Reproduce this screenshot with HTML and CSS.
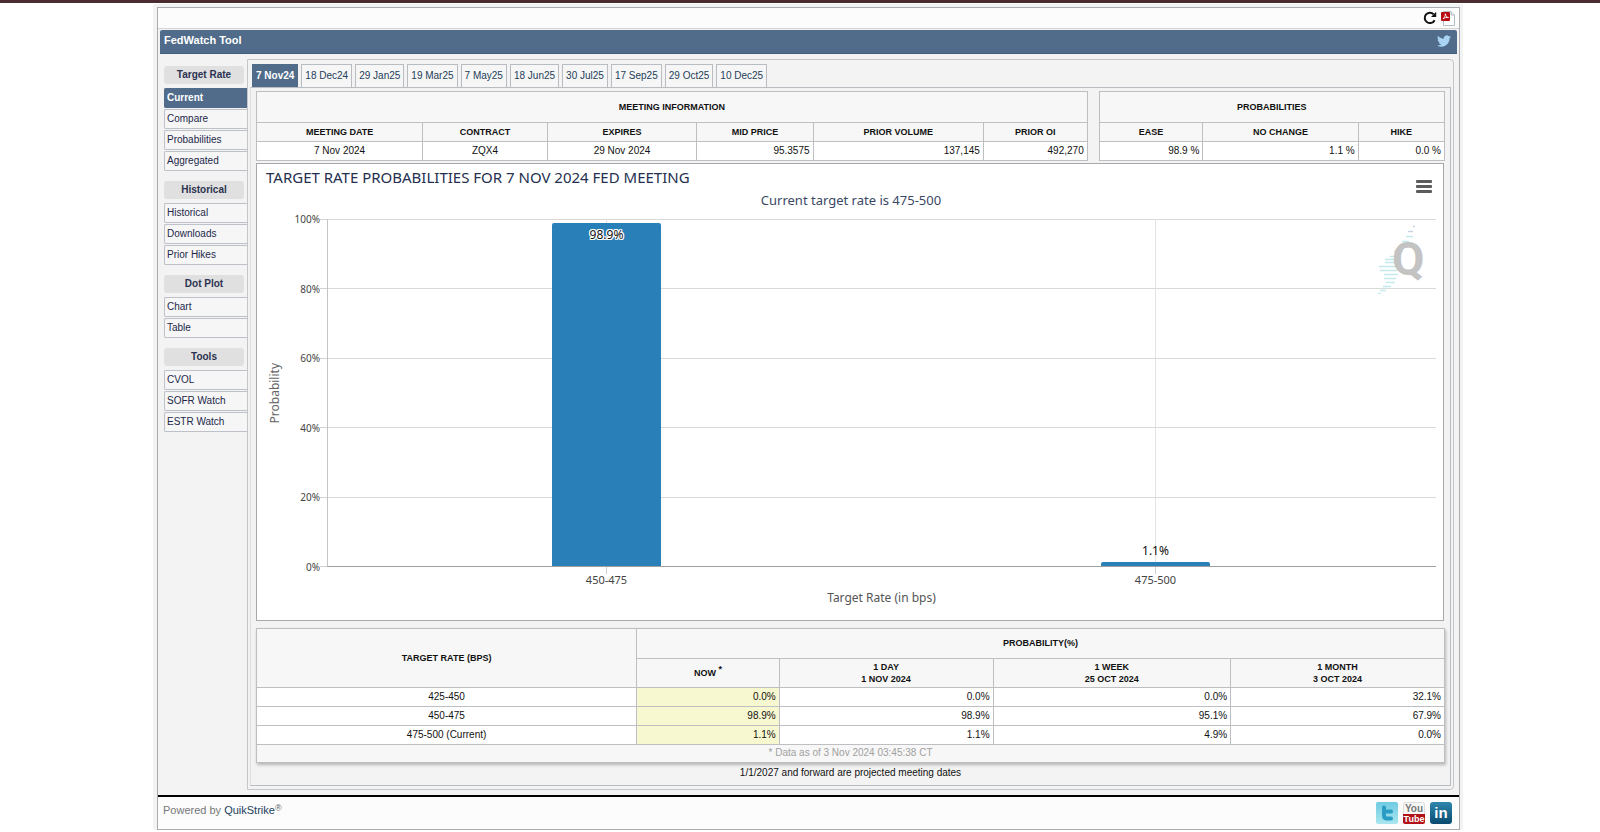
FILE: index.html
```html
<!DOCTYPE html>
<html lang="en">
<head>
<meta charset="utf-8">
<title>FedWatch Tool</title>
<link rel="stylesheet" href="styles.css">
</head>
<body>
<div class="page">
<div class="frame">
<div class="widget">
  <div class="toolbar">
    <button class="icon-btn" type="button" aria-label="Refresh">
      <svg width="14" height="14" viewBox="0 0 14 14"><path d="M11.6 9.2A5.2 5.2 0 1 1 10.6 3.2" fill="none" stroke="#111" stroke-width="2"/><path d="M13.2 0.8V6H8z" fill="#111"/></svg>
    </button>
    <button class="icon-btn" type="button" aria-label="Export to PDF">
      <svg width="14" height="15" viewBox="0 0 14 15"><path d="M2.5 .5H10L13.500 4V14.500H2.500z" fill="#fff" stroke="#b4bcc4"/><path d="M10 .5V4H13.500" fill="#e8edf2" stroke="#b4bcc4"/><rect x="0" y="1" width="9" height="9" rx="1" fill="#b80d12"/><path d="M2 8C3.500 6.500 4.500 5 4.300 2.800C5 5.500 6 6.500 7.500 6.500C5.500 6.200 3.500 6.600 2 8" fill="none" stroke="#fff" stroke-width=".9"/></svg>
    </button>
  </div>
  <header class="titlebar">
    <h1 class="titlebar-text">FedWatch Tool</h1>
    <a class="titlebar-link" href="#" aria-label="Twitter">
      <svg width="14" height="12" viewBox="0 2 24 20"><path fill="#a9d4f5" d="M23.950 4.570a10 10 0 0 1-2.820.77 4.960 4.960 0 0 0 2.160-2.720c-.95.550-2 .95-3.120 1.180a4.920 4.920 0 0 0-8.380 4.480C7.690 8.100 4.070 6.130 1.640 3.160a4.820 4.820 0 0 0-.67 2.480c0 1.710.87 3.210 2.190 4.100a4.900 4.900 0 0 1-2.230-.62v.06a4.920 4.920 0 0 0 3.950 4.830 5 5 0 0 1-2.210.08 4.940 4.940 0 0 0 4.600 3.420A9.870 9.870 0 0 1 0 19.540a13.990 13.990 0 0 0 7.550 2.210c9.050 0 14-7.500 14-13.980 0-.21 0-.42-.02-.63a9.940 9.940 0 0 0 2.420-2.570z"/></svg>
    </a>
  </header>
  <div class="main">
    <nav class="sidebar">
      <section class="group">
        <h2 class="group-title">Target Rate</h2>
        <a class="item item-active" href="#">Current</a>
        <a class="item" href="#">Compare</a>
        <a class="item" href="#">Probabilities</a>
        <a class="item" href="#">Aggregated</a>
      </section>
      <section class="group">
        <h2 class="group-title">Historical</h2>
        <a class="item" href="#">Historical</a>
        <a class="item" href="#">Downloads</a>
        <a class="item" href="#">Prior Hikes</a>
      </section>
      <section class="group">
        <h2 class="group-title">Dot Plot</h2>
        <a class="item" href="#">Chart</a>
        <a class="item" href="#">Table</a>
      </section>
      <section class="group">
        <h2 class="group-title">Tools</h2>
        <a class="item" href="#">CVOL</a>
        <a class="item" href="#">SOFR Watch</a>
        <a class="item" href="#">ESTR Watch</a>
      </section>
    </nav>
    <main class="panel">
      <nav class="tabs">
        <a class="tab tab-active" href="#">7 Nov24</a>
        <a class="tab" href="#">18 Dec24</a>
        <a class="tab" href="#">29 Jan25</a>
        <a class="tab" href="#">19 Mar25</a>
        <a class="tab" href="#">7 May25</a>
        <a class="tab" href="#">18 Jun25</a>
        <a class="tab" href="#">30 Jul25</a>
        <a class="tab" href="#">17 Sep25</a>
        <a class="tab" href="#">29 Oct25</a>
        <a class="tab" href="#">10 Dec25</a>
      </nav>
      <div class="content">
        <div class="summary">
          <table class="grid">
            <colgroup><col class="w-date"><col class="w-contract"><col class="w-expires"><col class="w-price"><col class="w-volume"><col></colgroup>
            <thead>
              <tr class="caption-row"><th colspan="6">MEETING INFORMATION</th></tr>
              <tr><th>MEETING DATE</th><th>CONTRACT</th><th>EXPIRES</th><th>MID PRICE</th><th>PRIOR VOLUME</th><th>PRIOR OI</th></tr>
            </thead>
            <tbody>
              <tr><td class="center">7 Nov 2024</td><td class="center">ZQX4</td><td class="center">29 Nov 2024</td><td>95.3575</td><td>137,145</td><td>492,270</td></tr>
            </tbody>
          </table>
          <table class="grid">
            <colgroup><col class="w-ease"><col class="w-nochange"><col></colgroup>
            <thead>
              <tr class="caption-row"><th colspan="3">PROBABILITIES</th></tr>
              <tr><th>EASE</th><th>NO CHANGE</th><th>HIKE</th></tr>
            </thead>
            <tbody>
              <tr><td>98.9 %</td><td>1.1 %</td><td>0.0 %</td></tr>
            </tbody>
          </table>
        </div>

        <section class="chart">
          <h2 class="chart-title">TARGET RATE PROBABILITIES FOR 7 NOV 2024 FED MEETING</h2>
          <p class="chart-subtitle">Current target rate is 475-500</p>
          <button class="chart-menu" type="button" aria-label="Chart menu"><span></span><span></span><span></span></button>
          <div class="chart-body">
            <div class="y-title"><span>Probability</span></div>
            <div class="y-axis"><span>100%</span><span>80%</span><span>60%</span><span>40%</span><span>20%</span><span>0%</span></div>
            <div class="plot">
              <div class="bands"><i></i><i></i><i></i><i></i><i></i></div>
              <svg class="watermark" width="48" height="72" viewBox="0 0 48 72">
                <g stroke="#c3e9ee" stroke-width="1.500"><path d="M29 14.500h7M25 19.500h7M21 24.500h8M17 29.500h9M13 34.500h9M8 37.500h13M8 40.500h13M2 44.500h18M3 48.500h17M7 52.500h14M7 56.500h12M9 60.500h9M6 64.500h8M3 68.500h6M1 71.500h3"/><path d="M31 9.500h5M36 4.500h2" stroke="#c9d2df"/></g>
                <text class="watermark-letter" x="15" y="53">Q</text>
              </svg>
              <div class="bars">
                <div class="slot"><div class="bar" style="height:98.9%"><span class="bar-label bar-label-inside">98.9%</span></div></div>
                <div class="slot"><div class="bar" style="height:1.1%"><span class="bar-label bar-label-above">1.1%</span></div></div>
              </div>
            </div>
            <div class="x-axis"><span>450-475</span><span>475-500</span></div>
            <div class="x-title">Target Rate (in bps)</div>
          </div>
        </section>

        <table class="grid history">
          <colgroup><col class="w-rate"><col class="w-now"><col class="w-day"><col class="w-week"><col></colgroup>
          <thead>
            <tr class="caption-row"><th rowspan="2">TARGET RATE (BPS)</th><th colspan="4">PROBABILITY(%)</th></tr>
            <tr class="period-row"><th>NOW <sup>*</sup></th><th>1 DAY<br>1 NOV 2024</th><th>1 WEEK<br>25 OCT 2024</th><th>1 MONTH<br>3 OCT 2024</th></tr>
          </thead>
          <tbody>
            <tr><td class="center">425-450</td><td class="now">0.0%</td><td>0.0%</td><td>0.0%</td><td>32.1%</td></tr>
            <tr><td class="center">450-475</td><td class="now">98.9%</td><td>98.9%</td><td>95.1%</td><td>67.9%</td></tr>
            <tr><td class="center">475-500 (Current)</td><td class="now">1.1%</td><td>1.1%</td><td>4.9%</td><td>0.0%</td></tr>
          </tbody>
          <tfoot>
            <tr><td class="asof" colspan="5">* Data as of 3 Nov 2024 03:45:38 CT</td></tr>
          </tfoot>
        </table>
        <p class="note">1/1/2027 and forward are projected meeting dates</p>
      </div>
    </main>
  </div>
  <footer class="footer">
    <p class="powered">Powered by <a href="#">QuikStrike<sup>®</sup></a></p>
    <div class="social">
      <a href="#" aria-label="Twitter">
        <svg width="22" height="22" viewBox="0 0 22 22"><defs><linearGradient id="tw" x2="0" y2="1"><stop offset="0" stop-color="#6fcbe2"/><stop offset="1" stop-color="#a9e6ef"/></linearGradient></defs><rect width="22" height="22" rx="2" fill="url(#tw)"/><path d="M8 5.500V13.500Q8 16.500 11 16.500H15M8 9.500H15" fill="none" stroke="#2b9cc4" stroke-width="4" stroke-linecap="round" stroke-linejoin="round"/></svg>
      </a>
      <a href="#" aria-label="YouTube">
        <svg width="22" height="22" viewBox="0 0 22 22"><rect x=".5" y=".5" width="21" height="21" rx="2" fill="#f7f7f7" stroke="#ddd"/><path d="M0 12H22V20Q22 22 20 22H2Q0 22 0 20z" fill="#b01218"/><text class="yt yt-you" x="11" y="10">You</text><text class="yt yt-tube" x="11" y="20">Tube</text></svg>
      </a>
      <a href="#" aria-label="LinkedIn">
        <svg width="22" height="22" viewBox="0 0 22 22"><defs><linearGradient id="li" x2="0" y2="1"><stop offset="0" stop-color="#2f86ad"/><stop offset="1" stop-color="#0a4a70"/></linearGradient></defs><rect width="22" height="22" rx="3" fill="url(#li)"/><text class="li" x="11" y="16">in</text></svg>
      </a>
    </div>
  </footer>
</div>
</div>
</div>
</body>
</html>
```
FILE: styles.css
```css
* { box-sizing: border-box; }

body {
  margin: 0;
  background: #fff;
  color: #111;
  font: 10px/14px "Liberation Sans", Arial, sans-serif;
}

h1, h2, p { margin: 0; font-weight: normal; }
a { color: inherit; text-decoration: none; }
svg { display: block; }

.page {
  border-top: 3px solid #4b2c30;
  padding: 1px 137px 0 153px;
}

.frame { background: #f3f3f3; padding: 3px 3px 0 4px; }

.widget {
  border: 1px solid #a9acb0;
  background: #f3f3f3;
}

.toolbar {
  display: flex;
  justify-content: flex-end;
  align-items: center;
  gap: 4px;
  height: 21px;
  padding-right: 4px;
  background: #fcfcfc;
  border-bottom: 1px solid #d4d4d4;
}

.icon-btn { border: 0; padding: 0; background: none; cursor: pointer; }

.titlebar {
  display: flex;
  justify-content: space-between;
  margin: 1px 2px 0;
  padding: 3px 6px 6px 4px;
  background: #506c8a;
  border-bottom: 1px solid #435d7a;
  border-radius: 2px 2px 0 0;
  color: #fff;
}

.titlebar-text { font-size: 11px; line-height: 14px; font-weight: bold; }
.titlebar-link { padding-top: 2px; }

.main { display: flex; padding: 5px 5px 5px 6px; }

/* Side navigation */
.sidebar { flex: 0 0 83px; padding-top: 7px; }
.group { display: flex; flex-direction: column; gap: 1px; margin-bottom: 10px; }

.group-title {
  margin: 0 3px 3px 0;
  background: #e0e0e0;
  border-radius: 3px;
  color: #2b3350;
  font-size: 10px;
  line-height: 18px;
  font-weight: bold;
  text-align: center;
}

.item {
  padding-left: 2px;
  border: 1px solid #bfc1c8;
  border-right: 0;
  border-radius: 2px 0 0 2px;
  background: #f6f6f6;
  color: #23284a;
  line-height: 18px;
}

.item-active {
  background: #506c8a;
  border-color: #506c8a;
  color: #fff;
  font-weight: bold;
}

/* Tabbed panel */
.panel {
  flex: 1;
  min-width: 0;
  padding: 0 2px 3px;
  border: 1px solid #c4c7ca;
  border-radius: 0 4px 4px 0;
}

.tabs { display: flex; gap: 3px; padding: 4px 0 0 2px; }

.tab {
  padding: 0 3px;
  border: 1px solid #b9bcc0;
  border-bottom: 0;
  background: #f6f6f6;
  color: #24405a;
  line-height: 22px;
}

.tab-active {
  background: #506c8a;
  border-color: #506c8a;
  color: #fff;
  font-weight: bold;
}

.content {
  padding: 3px 5px 0;
  border: 1px solid #b9bcc0;
  border-left-color: #dcdde0;
}

.summary {
  display: grid;
  grid-template-columns: 831fr 346fr;
  gap: 11px;
}

.grid {
  width: 100%;
  border-collapse: collapse;
  table-layout: fixed;
  background: #fff;
}

.grid th, .grid td { border: 1px solid #bdbfc3; padding: 2px 3px; }
.grid th { background: #f7f7f7; font-size: 9px; font-weight: bold; text-align: center; }
.grid td { text-align: right; }
.grid .caption-row th { padding: 8px 3px; }
.grid .center { text-align: center; }

.w-date { width: 20%; }
.w-contract { width: 15%; }
.w-expires { width: 18%; }
.w-price { width: 14%; }
.w-volume { width: 20.5%; }
.w-ease { width: 30%; }
.w-nochange { width: 45%; }
.w-rate { width: 32%; }
.w-now { width: 12%; }
.w-day { width: 18%; }
.w-week { width: 20%; }

/* Chart */
.chart {
  position: relative;
  margin: 2px 1px 7px 0;
  padding: 3px 7px 14px 9px;
  border: 1px solid #a6a8ac;
  background: #fff;
  color: #444;
  font-family: "Noto Sans", "Open Sans", sans-serif;
}

.chart-title { color: #24304f; font-size: 15px; line-height: 20px; }
.chart-subtitle { margin: 5px 0 11px; color: #3a4866; font-size: 13px; line-height: 16px; text-align: center; }

.chart-menu {
  position: absolute;
  top: 16px;
  right: 11px;
  display: grid;
  gap: 2px;
  width: 16px;
  padding: 0;
  border: 0;
  background: none;
  cursor: pointer;
}

.chart-menu span { height: 3px; border-radius: 1px; background: #5c5c5c; }

.chart-body {
  display: grid;
  grid-template-columns: 18px 43px 1fr;
}

.y-title { display: flex; align-items: center; justify-content: center; color: #666; font-size: 12px; }
.y-title span { writing-mode: vertical-rl; transform: rotate(180deg); }

.y-axis {
  display: flex;
  flex-direction: column;
  justify-content: space-between;
  margin: -7px 0;
}

.y-axis span { display: flex; justify-content: flex-end; align-items: center; line-height: 14px; }
.y-axis span::after { content: ""; width: 7px; height: 1px; background: #d2d2d2; }

.plot {
  position: relative;
  height: 348px;
  border-left: 1px solid #c4c4c4;
  border-bottom: 1px solid #a0a0a0;
}

.bands { display: flex; flex-direction: column; height: 100%; }
.bands i { flex: 1; border-top: 1px solid #d9d9d9; }
.watermark { position: absolute; top: 3px; right: 11px; }
.watermark-letter { fill: #c3c3c3; font: bold 47px Roboto, sans-serif; }

.bars {
  position: absolute;
  inset: 0 6px 0 4px;
  display: grid;
  grid-template-columns: 1fr 1fr;
}

.slot {
  display: flex;
  align-items: flex-end;
  justify-content: center;
  background: linear-gradient(#e3e3e3, #e3e3e3) center / 1px 100% no-repeat;
}

.bar { position: relative; width: 20%; background: #2980b9; border-radius: 2px 2px 0 0; }
.bar-label { position: absolute; left: 0; right: 0; color: #111; font-size: 12px; line-height: 14px; text-align: center; }
.bar-label-inside {
  top: 5px;
  text-shadow: 1px 0 #fff, -1px 0 #fff, 0 1px #fff, 0 -1px #fff, 1px 1px #fff, -1px -1px #fff, 1px -1px #fff, -1px 1px #fff;
}
.bar-label-above { bottom: 100%; margin-bottom: 4px; }

.x-axis {
  grid-column: 3;
  display: grid;
  grid-template-columns: 1fr 1fr;
  padding: 0 6px 0 5px;
  font-size: 11px;
  line-height: 12px;
}
.x-axis span { display: flex; flex-direction: column; align-items: center; }
.x-axis span::before { content: ""; width: 1px; height: 7px; background: #d2d2d2; }
.x-title { grid-column: 3; margin-top: 4px; color: #555; font-size: 12px; line-height: 16px; text-align: center; }

/* History table */
.history { box-shadow: 1px 2px 3px #b5b5b5; }
.history .caption-row th { padding: 7px 3px 8px; }
.history .period-row th { line-height: 12px; }
.history sup { font-size: 9px; line-height: 0; }
.history .now { background: #f8f8d0; }
.history .asof { padding: 1px 3px 2px; background: #f7f7f7; color: #a0a0a0; text-align: center; }
.note { padding: 3px 0 5px; text-align: center; }

/* Footer */
.footer {
  display: flex;
  justify-content: space-between;
  padding: 5px 7px 5px 5px;
  border-top: 2px solid #000;
  background: #fcfcfc;
}

.powered { padding-top: 1px; color: #777; font-size: 11px; }
.powered a { color: #1d3f5a; }
.powered sup { color: #666; font-size: 9px; line-height: 0; vertical-align: 3px; }
.social { display: flex; gap: 5px; }
.yt { font: bold 10px "Liberation Sans", sans-serif; text-anchor: middle; }
.yt-you { fill: #777; }
.yt-tube { fill: #fff; font-size: 9px; }
.li { fill: #fff; font: bold 15px "Liberation Sans", sans-serif; text-anchor: middle; }
```
